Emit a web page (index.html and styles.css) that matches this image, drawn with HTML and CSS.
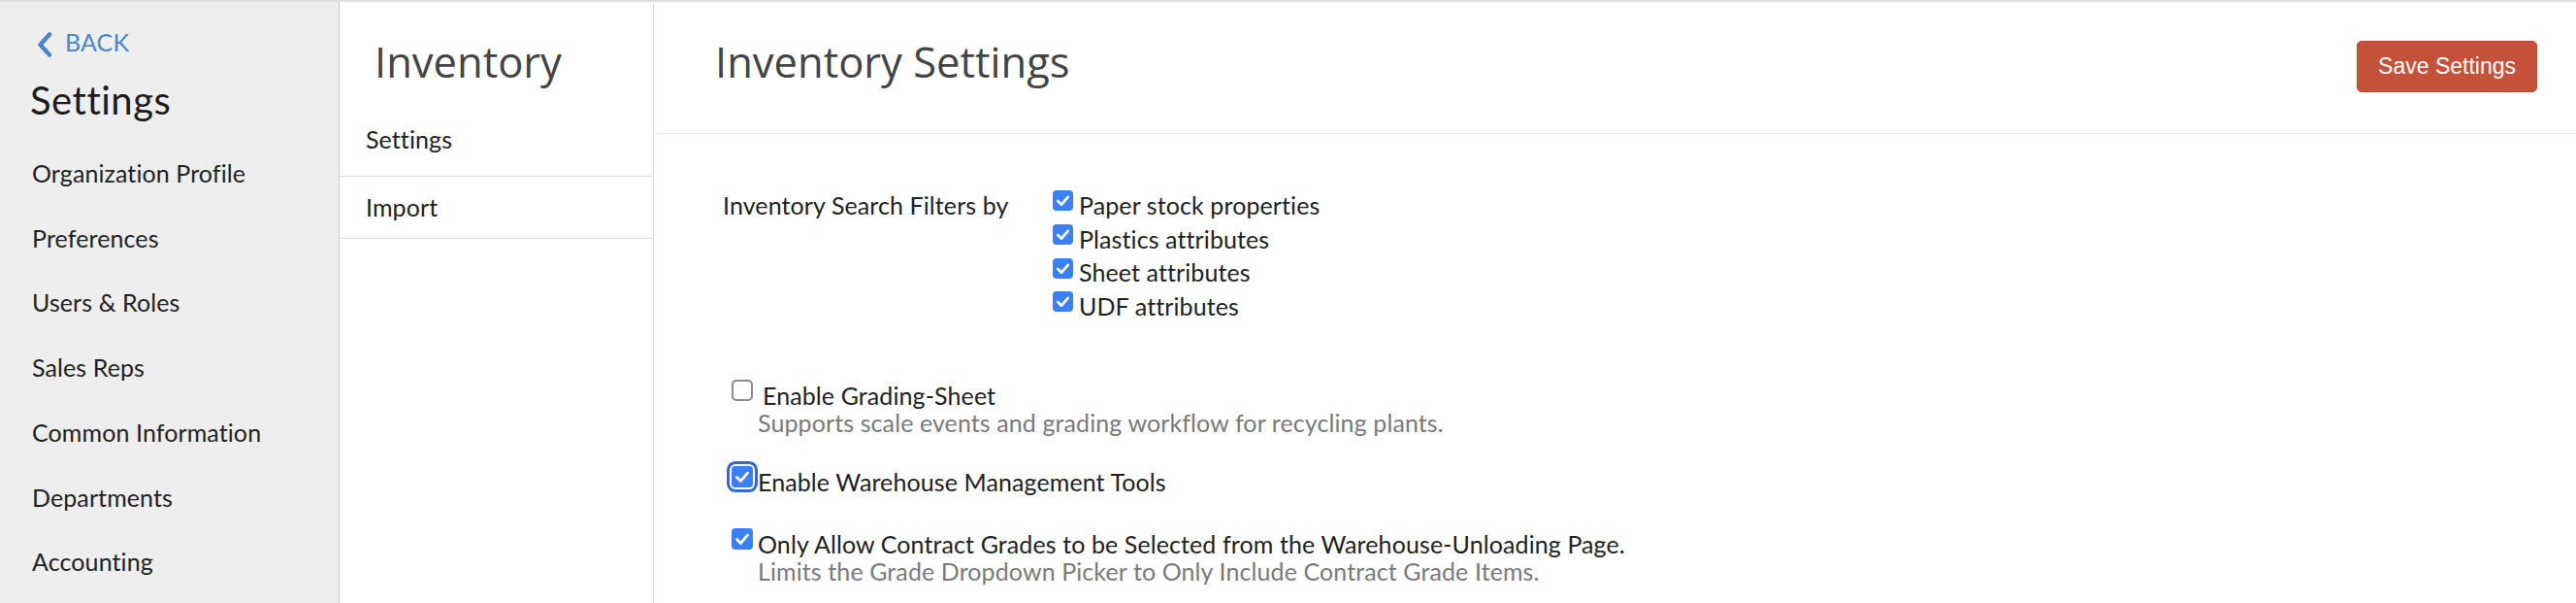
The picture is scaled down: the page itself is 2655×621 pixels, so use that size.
FILE: index.html
```html
<!DOCTYPE html>
<html lang="en">

<head>

 <meta charset="UTF-8">
 <meta name="viewport" content="width=device-width">

 <title>Inventory Settings</title>

 <!-- Estilos CSS -->
 <link rel="stylesheet" href="styles.css">

</head>

<body>

 <div class="app">

  <aside class="sidebar">
   <a class="back" href="#">
    <svg class="back-icon" width="16" height="26" viewBox="0 0 16 26">
     <path d="M13 2.5 L3.5 13 L13 23.5" fill="none" stroke="#4a86c8" stroke-width="4.5"
       stroke-linecap="round" stroke-linejoin="round"/>
    </svg>
    BACK
   </a>

   <h1 class="sidebar-title">Settings</h1>

   <nav class="sidebar-nav">
    <a href="#">Organization Profile</a>
    <a href="#">Preferences</a>
    <a href="#">Users &amp; Roles</a>
    <a href="#">Sales Reps</a>
    <a href="#">Common Information</a>
    <a href="#">Departments</a>
    <a href="#">Accounting</a>
   </nav>
  </aside>

  <div class="subnav">
   <h2 class="subnav-title">Inventory</h2>
   <a class="subnav-link first" href="#">Settings</a>
   <a class="subnav-link" href="#">Import</a>
  </div>

  <main class="content">

   <header class="content-header">
    <h2>Inventory Settings</h2>
    <button class="btn-save" type="button">Save Settings</button>
   </header>

   <section class="form">

    <div class="filters">
     <span class="filters-label">Inventory Search Filters by</span>
     <div class="filters-list">
      <label class="check-row">
       <span class="box checked"><svg viewBox="0 0 20 20"><path d="M5 10.5 L8.6 14 L15 6.5"/></svg></span>
       Paper stock properties
      </label>
      <label class="check-row">
       <span class="box checked"><svg viewBox="0 0 20 20"><path d="M5 10.5 L8.6 14 L15 6.5"/></svg></span>
       Plastics attributes
      </label>
      <label class="check-row">
       <span class="box checked"><svg viewBox="0 0 20 20"><path d="M5 10.5 L8.6 14 L15 6.5"/></svg></span>
       Sheet attributes
      </label>
      <label class="check-row">
       <span class="box checked"><svg viewBox="0 0 20 20"><path d="M5 10.5 L8.6 14 L15 6.5"/></svg></span>
       UDF attributes
      </label>
     </div>
    </div>

    <div class="option grading">
     <span class="box"></span>
     <div class="option-text">
      <div class="option-title spaced">Enable Grading-Sheet</div>
      <div class="option-desc">Supports scale events and grading workflow for recycling plants.</div>
     </div>
    </div>

    <div class="option warehouse">
     <span class="box checked focused"><svg viewBox="0 0 20 20"><path d="M5 10.5 L8.6 14 L15 6.5"/></svg></span>
     <div class="option-text">
      <div class="option-title">Enable Warehouse Management Tools</div>
     </div>
    </div>

    <div class="option contract">
     <span class="box checked"><svg viewBox="0 0 20 20"><path d="M5 10.5 L8.6 14 L15 6.5"/></svg></span>
     <div class="option-text">
      <div class="option-title">Only Allow Contract Grades to be Selected from the Warehouse-Unloading Page.</div>
      <div class="option-desc">Limits the Grade Dropdown Picker to Only Include Contract Grade Items.</div>
     </div>
    </div>

   </section>

  </main>

 </div>

</body>

</html>
```

FILE: styles.css
```css
/* Configuración básica */
* {
    margin: 0;
    padding: 0;
    box-sizing: border-box;
}

body {
    font-family: Lato, 'Liberation Sans', sans-serif;
    font-size: 25px;
    letter-spacing: 0.1px;
    color: #222;
    background-color: #fff;
    height: 100vh;
    overflow: hidden;
}

a {
    color: inherit;
    text-decoration: none;
}

.app {
    display: flex;
    height: 100%;
    border-top: 2px solid #dedede;
}

/* Menú lateral */
.sidebar {
    width: 350px;
    flex: none;
    background-color: #eeeeee;
    border-right: 1px solid #c9c9c9;
    padding: 26px 0 0 33px;
}

.back {
    display: flex;
    align-items: flex-start;
    gap: 13px;
    margin-left: 5px;
    color: #4a86c8;
    font-size: 25px;
    line-height: 30px;
}

.back-icon {
    margin-top: 5px;
    flex: none;
}

.sidebar-title {
    font-size: 40px;
    font-weight: normal;
    letter-spacing: 0.5px;
    line-height: 46px;
    margin: 21px 0 19px -2px;
    color: #1c1c1c;
}

.sidebar-nav a {
    display: block;
    line-height: 66.7px;
}

/* Submenú */
.subnav {
    width: 324px;
    flex: none;
    border-right: 1px solid #dcdcdc;
}

.subnav-title {
    font-family: 'Open Sans', sans-serif;
    font-size: 43.5px;
    font-weight: normal;
    letter-spacing: 0;
    line-height: 52px;
    color: #444;
    padding: 36px 0 22px 36px;
}

.subnav-link {
    display: block;
    line-height: 24px;
    padding: 19px 27px 20px;
    border-bottom: 1px solid #d9d9d9;
}

.subnav-link.first {
    padding-top: 19px;
    padding-bottom: 26px;
}

/* Contenido */
.content {
    flex: 1;
}

.content-header {
    display: flex;
    justify-content: space-between;
    align-items: center;
    height: 136px;
    padding: 0 40px 0 63px;
    border-bottom: 1px solid #e8e8e8;
}

.content-header h2 {
    font-family: 'Open Sans', sans-serif;
    font-size: 43.5px;
    font-weight: normal;
    letter-spacing: 0;
    line-height: 52px;
    color: #444;
    margin-bottom: 11px;
}

.btn-save {
    font-family: 'Liberation Sans', Arial, sans-serif;
    font-size: 23px;
    letter-spacing: 0;
    color: #fff;
    background-color: #c4523b;
    border: 1px solid #b8472f;
    border-radius: 5px;
    height: 53px;
    padding: 0 21px;
    margin-bottom: 2px;
    cursor: pointer;
}

.form {
    padding: 56px 0 0 71px;
}

.filters {
    display: grid;
    grid-template-columns: 340px auto;
    line-height: 34.7px;
}

.check-row {
    display: flex;
    align-items: flex-start;
    gap: 6px;
}

.check-row .box {
    width: 21px;
    height: 21px;
    margin-top: 2.3px;
}

/* Casillas */
.box {
    flex: none;
    display: block;
    width: 22px;
    height: 22px;
    border: 2px solid #8a8a8a;
    border-radius: 5px;
    background-color: #fff;
}

.box.checked {
    border: none;
    border-radius: 4px;
    background-color: #3b7ff5;
}

.box svg {
    display: block;
    width: 100%;
    height: 100%;
    fill: none;
    stroke: #fff;
    stroke-width: 2.6;
    stroke-linecap: round;
    stroke-linejoin: round;
}

.box.focused {
    box-shadow: 0 0 0 2px #fff, 0 0 0 5px #3767d4;
}

/* Opciones */
.option {
    display: flex;
    align-items: flex-start;
    gap: 5px;
    padding-left: 9px;
    line-height: 28px;
}

.option .box {
    margin-top: -2px;
}

.option-title.spaced {
    margin-left: 5px;
}

.option-desc {
    color: #7a7a7a;
}

.grading {
    margin-top: 60px;
}

.warehouse {
    margin-top: 33px;
}

.contract {
    margin-top: 36px;
}
```
